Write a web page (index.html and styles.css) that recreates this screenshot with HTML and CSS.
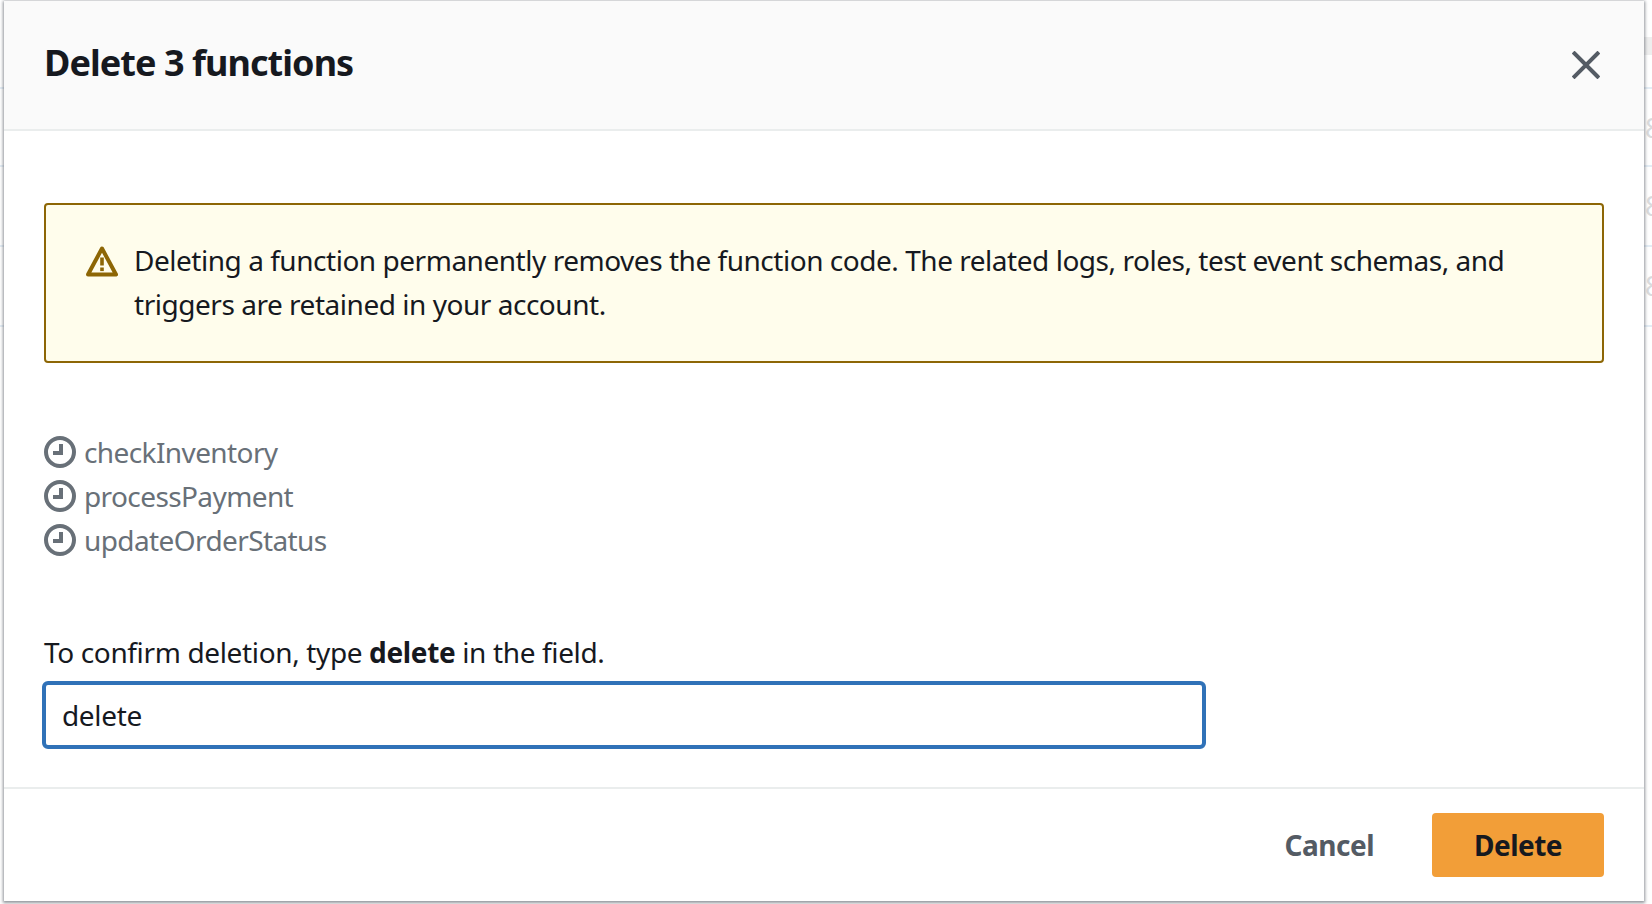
FILE: index.html
```html
<!DOCTYPE html>
<html lang="en">
<head>
<meta charset="utf-8">
<title>Delete 3 functions</title>
<link rel="stylesheet" href="styles.css">
</head>
<body>
<div class="backdrop" aria-hidden="true">
  <div class="bg-row bg-first"><span class="bg-head"></span><span class="bg-glyph">8</span></div>
  <div class="bg-row"><span class="bg-glyph">8</span></div>
  <div class="bg-row"><span class="bg-glyph">8</span></div>
  <div class="bg-row"></div>
</div>
<main class="dialog">
  <header class="dialog-header">
    <h1 class="dialog-title">Delete 3 functions</h1>
    <svg class="close-icon" viewBox="0 0 28 28"><path d="M2.5 2.5l23 23M25.5 2.5l-23 23"/></svg>
  </header>
  <section class="dialog-body">
    <div class="alert">
      <svg class="alert-icon" viewBox="0 0 32 32"><path class="alert-tri" d="M16 3.5L30 29.5H2Z"/><rect class="alert-mark" x="14.2" y="12.5" width="3.6" height="8"/><rect class="alert-mark" x="14.2" y="22.5" width="3.6" height="3.6"/></svg>
      <p class="alert-text">Deleting a function permanently removes the function code. The related logs, roles, test event schemas, and triggers are retained in your account.</p>
    </div>
    <ul class="fn-list">
      <li class="fn-item"><svg class="clock" viewBox="0 0 32 32"><circle cx="16" cy="16" r="14"/><path d="M17 8v9H9"/></svg><span>checkInventory</span></li>
      <li class="fn-item"><svg class="clock" viewBox="0 0 32 32"><circle cx="16" cy="16" r="14"/><path d="M17 8v9H9"/></svg><span>processPayment</span></li>
      <li class="fn-item"><svg class="clock" viewBox="0 0 32 32"><circle cx="16" cy="16" r="14"/><path d="M17 8v9H9"/></svg><span>updateOrderStatus</span></li>
    </ul>
    <label class="confirm-label" for="confirm">To confirm deletion, type <b>delete</b> in the field.</label>
    <input id="confirm" class="confirm-input" type="text" value="delete">
  </section>
  <footer class="dialog-footer">
    <button class="btn btn-link" type="button">Cancel</button>
    <button class="btn btn-primary" type="button">Delete</button>
  </footer>
</main>
</body>
</html>
```

FILE: styles.css
```css
* { box-sizing: border-box; }
html, body { margin: 0; height: 904px; overflow: hidden; background: #fff; }
body { font-family: "Noto Sans", "Open Sans", sans-serif; color: #16191f; position: relative; padding: 1px 8px 0 4px; }
.backdrop { position: absolute; inset: 0; padding-top: 87px; }
.bg-row { height: 80px; border-top: 2px solid #e4edf5; position: relative; }
.bg-first { height: 78px; }
.bg-glyph { position: absolute; left: 1645px; top: 18px; font-size: 28px; color: #d9dbdd; line-height: 40px; }
.bg-head { position: absolute; left: 1644px; top: -52px; width: 8px; height: 18px; background: #eee; }
.dialog { position: relative; width: 1640px; height: 900px; background: #fff; display: flex; flex-direction: column; box-shadow: 0 1px 3px 1px rgba(84,91,100,.65); }
.dialog-header { height: 130px; background: #fafafa; border-bottom: 2px solid #eaeded; display: flex; align-items: center; justify-content: space-between; padding: 0 40px; }
.dialog-title { margin: 0; font-size: 36px; line-height: 44px; font-weight: 700; letter-spacing: -.94px; position: relative; top: -2px; }
.close-icon { width: 28px; height: 28px; fill: none; stroke: #545b64; stroke-width: 4px; stroke-linecap: square; margin-right: 4px; }
.dialog-body { flex: 1; padding: 72px 40px 0; }
.alert { height: 160px; border: 2px solid #8d6605; border-radius: 4px; background: #fffdec; display: flex; padding: 33px 36px 0 40px; gap: 16px; }
.alert-icon { width: 32px; height: 32px; flex: none; margin-top: 7px; }
.alert-tri { fill: none; stroke: #8d6605; stroke-width: 4px; stroke-linejoin: round; }
.alert-mark { fill: #8d6605; }
.alert-text { margin: 0; font-size: 28px; line-height: 44px; letter-spacing: -.47px; }
.fn-list { list-style: none; margin: 67px 0 0; padding: 0; }
.fn-item { display: flex; align-items: center; gap: 8px; height: 44px; font-size: 28px; letter-spacing: -.6px; color: #687078; }
.clock { width: 32px; height: 32px; flex: none; fill: none; stroke: #687078; stroke-width: 4px; }
.confirm-label { display: block; margin-top: 68px; font-size: 28px; line-height: 44px; letter-spacing: -.36px; }
.confirm-input { display: block; width: 1164px; height: 68px; margin: 7px 0 0 -2px; border: 4px solid #3072b8; border-radius: 6px; padding: 0 16px; font: inherit; font-size: 28px; letter-spacing: -.35px; color: #16191f; outline: none; background: #fff; }
.dialog-footer { height: 114px; border-top: 2px solid #eaeded; display: flex; align-items: flex-start; justify-content: flex-end; gap: 44px; padding: 24px 40px 0; }
.btn { font: inherit; font-size: 28px; font-weight: 700; letter-spacing: -.5px; border: 0; border-radius: 4px; height: 64px; cursor: pointer; }
.btn-link { background: none; color: #545b64; padding: 0 14px; }
.btn-primary { width: 172px; background: #f29e38; color: #16191f; }
```
